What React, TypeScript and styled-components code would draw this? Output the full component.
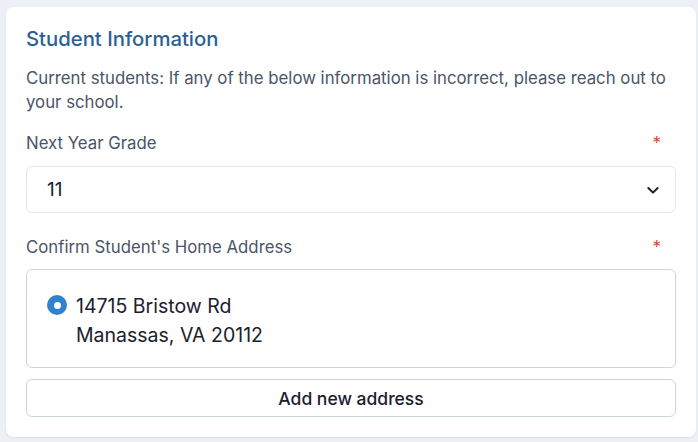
import React, { useState } from "react";
import styled, { createGlobalStyle } from "styled-components";

const GlobalStyle = createGlobalStyle`
  html, body {
    margin: 0;
    padding: 0;
    background: #edf1f7;
    font-family: Inter, "Noto Sans", "Liberation Sans", sans-serif;
    -webkit-font-smoothing: antialiased;
  }
  * {
    box-sizing: border-box;
  }
`;

const Page = styled.div`
  padding: 7px 2px 5px 6px;
`;

const Card = styled.section`
  background: #ffffff;
  border-radius: 8px;
  box-shadow: 0 1px 3px rgba(15, 23, 42, 0.08);
  padding: 20px 20px 20px 20px;
  display: flex;
  flex-direction: column;
`;

const CardTitle = styled.h2`
  margin: 0;
  font-size: 20.3px;
  line-height: 24px;
  font-weight: 500;
  color: #2c5f96;
`;

const Description = styled.p`
  margin: 15px 0 0;
  font-size: 16.8px;
  line-height: 24px;
  color: #4a5568;
`;

const FieldLabel = styled.div<{ $top: number }>`
  display: flex;
  justify-content: space-between;
  align-items: center;
  margin-top: ${(p) => p.$top}px;
  padding-right: 15px;
  font-size: 16.8px;
  line-height: 24px;
  color: #4a5568;
`;

const Required = styled.span`
  color: #e53e3e;
  font-size: 17px;
`;

const SelectBox = styled.div`
  margin-top: 11px;
  height: 47px;
  border: 1px solid #e2e8f0;
  border-radius: 6px;
  display: flex;
  align-items: center;
  justify-content: space-between;
  padding: 0 14px 0 20px;
  font-size: 19px;
  color: #1a202c;
`;

const AddressBox = styled.div`
  margin-top: 10px;
  border: 1px solid #cbd5e0;
  border-radius: 6px;
  padding: 22px 20px 17px 20px;
  display: flex;
  align-items: flex-start;
  gap: 9px;
`;

const Radio = styled.span<{ $checked: boolean }>`
  flex: none;
  width: 20px;
  height: 20px;
  margin-top: 3px;
  border-radius: 50%;
  background: ${(p) => (p.$checked ? "#3182ce" : "#ffffff")};
  border: ${(p) => (p.$checked ? "none" : "2px solid #cbd5e0")};
  display: flex;
  align-items: center;
  justify-content: center;
  cursor: pointer;

  &::after {
    content: "";
    width: 7px;
    height: 7px;
    border-radius: 50%;
    background: #ffffff;
    display: ${(p) => (p.$checked ? "block" : "none")};
  }
`;

const AddressText = styled.div`
  font-size: 19.5px;
  line-height: 29px;
  color: #1a202c;
`;

const AddButton = styled.button`
  margin-top: 11px;
  height: 38px;
  width: 100%;
  background: #ffffff;
  border: 1px solid #cbd5e0;
  border-radius: 6px;
  font-family: inherit;
  font-size: 17.5px;
  font-weight: 500;
  color: #1a202c;
  cursor: pointer;
`;

const Chevron = () => (
  <svg width="16" height="16" viewBox="0 0 24 24" fill="none" stroke="#1a202c" strokeWidth="3" strokeLinecap="round" strokeLinejoin="round">
    <path d="M5 9l7 7 7-7" />
  </svg>
);

const App: React.FC = () => {
  const [checked, setChecked] = useState(true);

  return (
    <>
      <GlobalStyle />
      <Page>
        <Card>
          <CardTitle>Student Information</CardTitle>
          <Description>
            Current students: If any of the below information is incorrect, please reach out to your school.
          </Description>

          <FieldLabel $top={17}>
            <span>Next Year Grade</span>
            <Required>*</Required>
          </FieldLabel>
          <SelectBox>
            <span>11</span>
            <Chevron />
          </SelectBox>

          <FieldLabel $top={22}>
            <span>Confirm Student's Home Address</span>
            <Required>*</Required>
          </FieldLabel>
          <AddressBox>
            <Radio $checked={checked} onClick={() => setChecked(true)} />
            <AddressText>
              14715 Bristow Rd
              <br />
              Manassas, VA 20112
            </AddressText>
          </AddressBox>

          <AddButton>Add new address</AddButton>
        </Card>
      </Page>
    </>
  );
};

export default App;
